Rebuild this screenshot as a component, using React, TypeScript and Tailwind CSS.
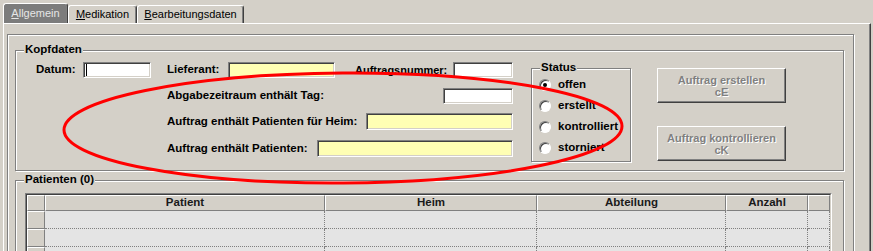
import clsx from "clsx";

const etched = "border border-[#808080] shadow-[inset_1px_1px_0_#fff,1px_1px_0_#fff]";
const raised =
  "border border-t-white border-l-white border-r-[#404040] border-b-[#404040] shadow-[inset_-1px_-1px_0_#808080]";

function Field({ className, yellow, caret }: { className: string; yellow?: boolean; caret?: boolean }) {
  return (
    <div
      className={clsx(
        "flex items-center border border-t-[#808080] border-l-[#808080] border-r-white border-b-white shadow-[inset_1px_1px_0_#404040,inset_-1px_-1px_0_#d4d0c8]",
        yellow ? "bg-[#ffffb4]" : "bg-white",
        className
      )}
    >
      {caret && <span className="ml-[2px] h-[12px] w-[1px] bg-black" />}
    </div>
  );
}

function Group({ title, className, children }: { title: string; className: string; children?: React.ReactNode }) {
  return (
    <div className={clsx("relative", etched, className)}>
      <span className="absolute -top-[8px] left-[8px] bg-[#d4d0c8] px-[1px] text-[11.5px] font-bold leading-[13px]">
        {title}
      </span>
      {children}
    </div>
  );
}

function Tab({ label, selected, className }: { label: string; selected?: boolean; className: string }) {
  return (
    <div
      className={clsx(
        "flex items-center justify-center rounded-t-[3px] border-t border-l border-r border-t-white border-l-white border-r-[#404040] shadow-[inset_-1px_0_0_#808080]",
        selected ? "h-[20px] bg-[#7c7c7c] text-[#e6e6e6]" : "h-[18px] text-black",
        className
      )}
    >
      <span>
        <span className="underline underline-offset-[1px]">{label[0]}</span>
        {label.slice(1)}
      </span>
    </div>
  );
}

function Radio({ label, checked }: { label: string; checked?: boolean }) {
  return (
    <div className="flex h-[21px] items-center gap-[7px] pl-[7px]">
      <span className="flex h-[12px] w-[12px] items-center justify-center rounded-full border border-t-[#808080] border-l-[#808080] border-r-white border-b-white bg-white shadow-[inset_1px_1px_0_#404040]">
        {checked && <span className="h-[4px] w-[4px] rounded-full bg-black" />}
      </span>
      <span className="text-[11.5px] font-bold">{label}</span>
    </div>
  );
}

function ActionButton({ lines }: { lines: [string, string] }) {
  return (
    <div
      className={clsx(
        "flex h-[35px] w-[129px] flex-col items-center justify-center text-[11px] font-bold leading-[12px] text-[#808080] [text-shadow:1px_1px_0_#fff]",
        raised
      )}
    >
      <span>{lines[0]}</span>
      <span>{lines[1]}</span>
    </div>
  );
}

const columns = ["", "Patient", "Heim", "Abteilung", "Anzahl", ""];

export default function App() {
  return (
    <div className="relative h-[251px] w-[873px] overflow-hidden bg-[#d4d0c8] font-['Liberation_Sans',Arial,sans-serif] text-[11px] text-black">
      {/* tab strip */}
      <div className="flex h-[23px] items-end pl-[3px]">
        <Tab label="Allgemein" selected className="w-[65px]" />
        <Tab label="Medikation" className="w-[69px]" />
        <Tab label="Bearbeitungsdaten" className="w-[107px]" />
      </div>

      {/* tab page */}
      <div className="ml-[3px] h-[400px] w-[868px] border-t border-l border-r border-t-white border-l-white border-r-[#404040] pt-[10px] pl-[3px] shadow-[inset_-1px_0_0_#808080]">
        <div className={clsx("h-[400px] w-[847px] pl-[7px] pt-[15px]", etched)}>
          <Group title="Kopfdaten" className="flex h-[121px] w-[829px]">
            <div className="w-[515px] text-[11.5px] font-bold">
              <div className="mt-[11px] flex h-[16px] items-center">
                <span className="ml-[20px] w-[47px]">Datum:</span>
                <Field className="h-[16px] w-[68px]" caret />
                <span className="ml-[16px] w-[61px]">Lieferant:</span>
                <Field className="h-[16px] w-[107px]" yellow />
                <span className="ml-[20px] w-[98px] text-[11px]">Auftragsnummer:</span>
                <Field className="h-[16px] w-[60px]" />
              </div>
              <div className="ml-[151px] mt-[10px] flex h-[16px] w-[346px] items-center justify-between">
                <span>Abgabezeitraum enthält Tag:</span>
                <Field className="h-[16px] w-[70px]" />
              </div>
              <div className="ml-[151px] mt-[9px] flex h-[17px] w-[346px] items-center justify-between">
                <span>Auftrag enthält Patienten für Heim:</span>
                <Field className="h-[17px] w-[147px]" yellow />
              </div>
              <div className="ml-[151px] mt-[10px] flex h-[17px] w-[346px] items-center justify-between">
                <span>Auftrag enthält Patienten:</span>
                <Field className="h-[17px] w-[196px]" yellow />
              </div>
            </div>

            <Group title="Status" className="mt-[17px] h-[94px] w-[100px] pt-[5px]">
              <Radio label="offen" checked />
              <Radio label="erstellt" />
              <Radio label="kontrolliert" />
              <Radio label="storniert" />
            </Group>

            <div className="ml-[26px] mt-[17px] flex flex-col gap-[23px]">
              <ActionButton lines={["Auftrag erstellen", "cE"]} />
              <ActionButton lines={["Auftrag kontrollieren", "cK"]} />
            </div>
          </Group>

          <Group title="Patienten (0)" className="mt-[9px] h-[200px] w-[829px] pl-[9px] pt-[12px]">
            <div className="w-[807px] border border-t-[#808080] border-l-[#808080] border-r-white border-b-white">
              <div className="border border-t-[#404040] border-l-[#404040] border-r-[#d4d0c8] border-b-[#d4d0c8]">
                <div className="grid grid-cols-[18px_280px_212px_189px_82px_1fr]">
                  {columns.map((c, i) => (
                    <div
                      key={i}
                      className="flex h-[16px] items-center justify-center border border-t-white border-l-white border-r-[#808080] border-b-[#808080] bg-[#d4d0c8] text-[11.5px] font-bold leading-none text-[#1a1a1a]"
                    >
                      {c}
                    </div>
                  ))}
                  {[0, 1, 2].map((r) =>
                    columns.map((_, i) =>
                      i === 0 ? (
                        <div
                          key={`${r}-${i}`}
                          className="h-[18px] border border-t-white border-l-white border-r-[#808080] border-b-[#808080] bg-[#d4d0c8]"
                        />
                      ) : (
                        <div
                          key={`${r}-${i}`}
                          className="h-[18px] border-r border-b border-dotted border-[#808080] bg-[#e4e4e4]"
                        />
                      )
                    )
                  )}
                </div>
              </div>
            </div>
          </Group>
        </div>
      </div>

      {/* red highlight ellipse */}
      <svg className="pointer-events-none absolute left-0 top-0" width="873" height="251" viewBox="0 0 873 251">
        <ellipse cx="343" cy="128" rx="279" ry="55" fill="none" stroke="#ff0000" strokeWidth="3" transform="rotate(-0.4 343 128)" />
      </svg>
    </div>
  );
}
